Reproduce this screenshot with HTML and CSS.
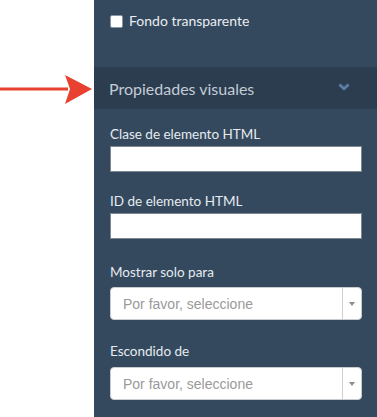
FILE: index.html
```html
<!DOCTYPE html>
<html lang="es">
<head>
<meta charset="utf-8">
<link rel="stylesheet" href="styles.css">
</head>
<body>
<div class="page">
  <div class="gutter">
    <svg class="pointer" width="94" height="32" viewBox="0 0 94 32" aria-hidden="true">
      <rect x="0" y="12.5" width="68" height="3" fill="#e8412f"/>
      <polygon points="65,0 92,14 65,29 70,14" fill="#e8412f"/>
    </svg>
  </div>
  <div class="panel">
    <div class="top">
      <label class="check"><span class="box"></span>Fondo transparente</label>
    </div>
    <div class="header">
      <span>Propiedades visuales</span>
      <svg class="chev" width="12" height="8" viewBox="0 0 12 8" aria-hidden="true">
        <path d="M1.5 1.5 L6 5.8 L10.5 1.5" fill="none" stroke="#5a7ea6" stroke-width="2.8"/>
      </svg>
    </div>
    <div class="fields">
      <div class="field f1">
        <div class="lbl">Clase de elemento HTML</div>
        <div class="input"></div>
      </div>
      <div class="field f2">
        <div class="lbl">ID de elemento HTML</div>
        <div class="input"></div>
      </div>
      <div class="field f3">
        <div class="lbl">Mostrar solo para</div>
        <div class="select"><span class="ph">Por favor, seleccione</span><span class="caret"><i></i></span></div>
      </div>
      <div class="field f4">
        <div class="lbl">Escondido de</div>
        <div class="select"><span class="ph">Por favor, seleccione</span><span class="caret"><i></i></span></div>
      </div>
    </div>
  </div>
</div>
</body>
</html>
```
FILE: styles.css
```css
html, body {
  margin: 0;
  padding: 0;
  background: #ffffff;
}
body {
  font-family: Lato, "Open Sans", sans-serif;
}
.page {
  display: flex;
  height: 417px;
  overflow: hidden;
}
.gutter {
  width: 94px;
  flex: none;
  padding-top: 75px;
}
.pointer {
  display: block;
}
.panel {
  flex: 1;
  background: #34495e;
  color: #e6ebf0;
}
.top {
  height: 67px;
  box-sizing: border-box;
  padding: 12px 0 0 16px;
}
.check {
  display: flex;
  align-items: center;
  gap: 6px;
  font-size: 14px;
  line-height: 18px;
  color: #e9edf1;
}
.box {
  width: 11px;
  height: 11px;
  background: #fff;
  border: 1px solid #8a96a3;
  border-radius: 2px;
}
.header {
  height: 42px;
  background: #2c3d50;
  display: flex;
  align-items: center;
  justify-content: space-between;
  padding: 0 27px 0 15px;
  font-size: 16px;
  color: #c3ccd5;
}
.chev {
  margin-top: -3px;
}
.fields {
  padding: 17px 15px 0 16px;
}
.lbl {
  font-size: 13.5px;
  line-height: 16px;
  margin-bottom: 4px;
  color: #e6ebf0;
}
.input {
  height: 24px;
  background: #fff;
  border: 1px solid #7d8893;
}
.f1 { margin-bottom: 21px; }
.f2 { margin-bottom: 25px; }
.f3 { margin-bottom: 23px; }
.f3 .lbl { margin-bottom: 7px; }
.f4 .lbl { margin-bottom: 8px; }
.select {
  height: 31px;
  background: #fff;
  border: 1px solid #c8cdd2;
  border-radius: 4px;
  display: flex;
  align-items: center;
}
.ph {
  flex: 1;
  padding-left: 12px;
  font-family: "Liberation Sans", Arial, sans-serif;
  font-size: 14px;
  color: #9a9a9a;
}
.caret {
  width: 18px;
  align-self: stretch;
  border-left: 1px solid #cfcfcf;
  display: flex;
  align-items: center;
  justify-content: center;
}
.caret i {
  width: 0;
  height: 0;
  border-left: 3.5px solid transparent;
  border-right: 3.5px solid transparent;
  border-top: 4px solid #8c8c8c;
}
```
